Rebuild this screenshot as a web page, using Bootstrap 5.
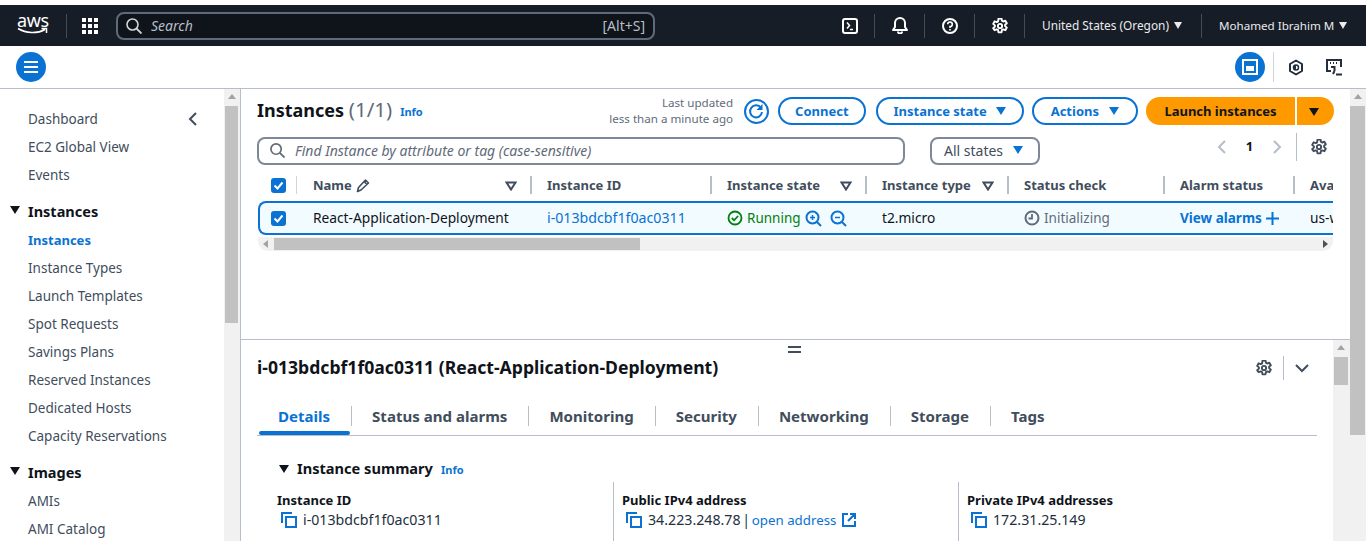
<!DOCTYPE html>
<html lang="en">

<head>
    <meta charset="UTF-8">
    <title>Instances | EC2</title>
    <link href="https://cdn.jsdelivr.net/npm/bootstrap@5.3.0/dist/css/bootstrap.min.css" rel="stylesheet">
    <style>
        body { font-family: "Noto Sans", "Open Sans", sans-serif; font-size: 13.5px; color: #0f141a; height: 541px; overflow: hidden; padding-top: 5px; background: #fff; }
        svg { display: block; flex: none; }
        a { text-decoration: none; color: #0972d3; }

        .topbar { height: 41px; background: #161d26; color: #e9ebed; font-size: 11.85px; }
        .aws-logo { width: 66px; padding-left: 17px; line-height: 1; color: #fff; }
        .aws-word { font-size: 18px; display: block; margin-top: -6px; height: 16px; letter-spacing: -.4px; }
        .top-sep { width: 1px; height: 24px; background: #414d5c; flex: none; }
        .apps-cell { width: 49px; padding-left: 15px; }
        .global-search { width: 539px; height: 28px; background: #0f141a; border: 2px solid #5f6b7a; border-radius: 8px; color: #b6bec9; font-size: 14px; padding: 0 8px; }
        .global-search i { margin-left: 9px; }
        .top-right { margin-left: auto; }
        .top-cell { width: 49px; }
        .region-cell { width: 176px; padding: 1px 0 0 17px; white-space: nowrap; }
        .user-cell { width: 164px; padding: 1px 0 0 17px; white-space: nowrap; font-size: 11.6px; }
        .nav-caret { display: inline-block; margin-left: 5px; vertical-align: 1px; border: 4.5px solid transparent; border-top: 7px solid #e9ebed; border-bottom: 0; }

        .subbar { height: 43px; border-bottom: 1px solid #b6bec9; padding: 0 13px 0 16px; }
        .round-btn { width: 30px; height: 30px; border-radius: 50%; background: #0972d3; }
        .sub-sep { width: 1px; height: 30px; background: #d1d5db; margin: 0 3px 0 8px; }
        .sub-icon { width: 38px; }

        .workspace { height: 452px; }
        .side-pane { width: 224px; flex: none; padding: 16px 0 0 28px; color: #414d5c; position: relative; }
        .side-link { height: 28px; line-height: 28px; white-space: nowrap; }
        .side-link.active { color: #0972d3; font-weight: 700; font-size: 13px; }
        .side-head { height: 28px; margin-top: 9px; line-height: 26px; font-size: 14.5px; font-weight: 700; color: #0f141a; position: relative; }
        .side-head::before { content: ""; position: absolute; left: -18px; top: 8px; border: 5.5px solid transparent; border-top: 8px solid #0f141a; border-bottom: 0; }
        .side-close { position: absolute; left: 188px; top: 23px; }

        .scroll-track { width: 16px; flex: none; background: #f1f1f1; position: relative; }
        .scroll-track::before { content: ""; position: absolute; left: 4px; top: 5px; border: 4px solid transparent; border-bottom: 5px solid #a3a3a3; border-top: 0; }
        .scroll-thumb { position: absolute; left: 1px; right: 2px; background: #c1c1c1; }
        .side-scroll .scroll-thumb { top: 17px; height: 217px; }
        .page-scroll .scroll-thumb { top: 17px; height: 329px; left: 0; right: 1px; }
        .inner-scroll { width: 17px; }
        .inner-scroll .scroll-thumb { top: 17px; height: 28px; }

        .main-area { border-left: 1px solid #b6bec9; min-width: 0; }
        .list-pane { height: 251px; padding: 8px 0 0 16px; border-bottom: 1px solid #b6bec9; }
        .list-inner { width: 1077px; }
        .head-row { height: 28px; }
        .page-title { font-size: 18px; font-weight: 700; margin: 0 0 4px; line-height: 28px; }
        .page-title span { font-weight: 400; font-size: 20.5px; color: #5f6b7a; }
        .info-link { font-size: 11px; font-weight: 700; margin: 3px 0 0 8px; }
        .updated-note { font-size: 11.6px; line-height: 16px; color: #5f6b7a; text-align: right; margin-right: 11px; }
        .refresh-icon { margin-right: 9px; }
        .btn-aws { height: 28px; padding: 0 16px; border: 2px solid #0972d3; border-radius: 20px; color: #0972d3; font-size: 13px; font-weight: 700; line-height: 24px; background: #fff; white-space: nowrap; }
        .btn-aws:hover { color: #0972d3; border-color: #0972d3; background: #fff; }
        .btn-connect { padding: 0 15px; }
        .btn-state { margin-left: 10px; }
        .btn-state .down-tri { margin-left: 9px; }
        .btn-actions { padding: 0 17px; }
        .down-tri { display: inline-block; margin-left: 10px; vertical-align: 1px; border: 5.5px solid transparent; border-top: 8px solid currentColor; border-bottom: 0; }
        .btn-launch { height: 28px; width: 149px; margin-left: 8px; padding: 1px 0 0; background: #ff9900; color: #0f141a; font-size: 13px; font-weight: 700; border: 0; border-radius: 20px 0 0 20px; white-space: nowrap; }
        .btn-launch-caret { height: 28px; width: 37px; margin-left: 2px; padding: 0 4px 0 0; background: #ff9900; color: #0f141a; border: 0; border-radius: 0 20px 20px 0; }
        .btn-launch-caret .down-tri { margin-left: 0; }

        .filter-row { height: 28px; margin-top: 12px; }
        .find-box { width: 648px; height: 28px; border: 2px solid #7d8998; border-radius: 8px; padding: 0 10px 2px 11px; font-size: 14px; font-style: italic; color: #5f6b7a; gap: 10px; }
        .state-select { width: 110px; height: 28px; margin-left: 25px; border: 2px solid #7d8998; border-radius: 8px; padding: 0 0 2px 12px; font-size: 14px; color: #414d5c; }
        .state-select .down-tri { color: #0972d3; }
        .pager { margin: 0 7px 8px auto; }
        .pager-num { width: 47px; text-align: center; font-weight: 700; font-size: 13px; color: #0f141a; }
        .pager-sep { width: 1px; height: 28px; background: #b6bec9; margin: 0 14px; }
        .tool-gear { color: #414d5c; }

        .table-clip { width: 1075px; margin-left: 1px; margin-top: 8px; overflow: hidden; }
        .table-clip table { table-layout: fixed; width: 1075px; border-collapse: separate; border-spacing: 0; margin: 0; }
        .table-clip th, .table-clip td { padding: 0 0 0 17px; white-space: nowrap; overflow: hidden; vertical-align: middle; border: 0; }
        .table-clip th { height: 24px; padding-top: 1px; font-weight: 700; font-size: 13px; color: #414d5c; position: relative; }
        .table-clip th + th::before { content: ""; position: absolute; left: 0; top: 3px; bottom: 3px; width: 2px; background: #b6bec9; }
        .table-clip th.light-sep::before { width: 1px; background: #d1d5db; }
        .th-inner { padding-right: 13px; }
        .table-clip td { height: 34px; background: #f2fbff; border-top: 2px solid #0972d3; border-bottom: 2px solid #0972d3; color: #0f141a; font-size: 13.75px; }
        .table-clip td:first-child { border-left: 2px solid #0972d3; border-radius: 8px 0 0 8px; padding-left: 11px; }
        .table-clip th:first-child { padding-left: 13px; }
        .table-clip .head-gap td { height: 4px; background: none; border: 0; padding: 0; }
        .id-link { font-size: 14.2px; }
        .state-ok { color: #037f0c; font-size: 13.5px; }
        .state-wait { color: #5f6b7a; font-size: 13.5px; }
        .cell-gap { gap: 4px; }
        .alarm-link { font-weight: 700; font-size: 13.5px; }
        .h-scroll { height: 14px; margin: 2px 0 0 1px; width: 1075px; background: #f1f1f1; border-radius: 0 0 10px 10px; position: relative; }
        .h-thumb { position: absolute; left: 16px; width: 366px; top: 1px; bottom: 1px; background: #c1c1c1; }
        .h-left, .h-right { position: absolute; top: 3px; border: 4px solid transparent; }
        .h-left { left: 5px; border-right: 5px solid #a3a3a3; border-left: 0; }
        .h-right { right: 5px; border-left: 5px solid #505050; border-right: 0; }

        .detail-wrap { min-height: 0; }
        .detail-pane { min-width: 0; padding: 0 16px; position: relative; }
        .drag-mark { position: absolute; left: 547px; top: 6px; width: 13px; height: 7px; border-top: 2px solid #414d5c; border-bottom: 2px solid #414d5c; }
        .detail-head { height: 66px; padding-bottom: 11px; }
        .detail-title { font-size: 17.6px; font-weight: 700; margin: 0; }
        .detail-tools { margin-left: auto; margin-right: 7px; }
        .tools-sep { width: 1px; height: 24px; background: #b6bec9; margin: 0 10px 0 11px; }
        .tab-row { border-bottom: 1px solid #b6bec9; height: 30px; }
        .tab-item { padding: 0 21px; height: 29px; font-size: 15.05px; font-weight: 700; color: #414d5c; position: relative; line-height: 21px; white-space: nowrap; }
        .tab-item + .tab-item::before { content: ""; position: absolute; left: 0; top: 0; height: 20px; width: 1px; background: #b6bec9; }
        .tab-item.active { color: #0972d3; }
        .tab-item.active::after { content: ""; position: absolute; left: 2px; right: 1px; bottom: 0; height: 4px; border-radius: 4px; background: #0972d3; }
        .summary-head { margin: 22px 0 0 22px; height: 22px; font-size: 14.6px; font-weight: 700; }
        .summary-caret { display: inline-block; margin-right: 8px; border: 5.5px solid transparent; border-top: 8px solid #0f141a; border-bottom: 0; }
        .summary-grid { margin: 2px 0 0 20px; width: 1030px; }
        .summary-col { width: 345px; height: 60px; padding-top: 9px; }
        .summary-col + .summary-col { border-left: 1px solid #b6bec9; padding-left: 8px; }
        .summary-col:first-child { width: 336px; }
        .field-name { font-size: 13px; font-weight: 700; line-height: 18px; }
        .field-value { margin: 2px 0 0 4px; line-height: 18px; font-size: 14.2px; color: #232f3e; gap: 6px; }
        .field-value span { word-spacing: -2px; }
        .field-value a { font-size: 13.3px; word-spacing: 0; }
    </style>
</head>

<body>
    <svg width="0" height="0" class="position-absolute">
        <defs>
            <symbol id="gear" viewBox="0.5 0.5 15 15">
                <path fill="none" stroke="currentColor" stroke-width="1.800" stroke-linejoin="round" d="M6.600 1h2.800l.4 2.100 1.200.7 2-.7 1.400 2.400-1.600 1.400v1.200l1.600 1.400-1.400 2.400-2-.7-1.200.7-.4 2.100H6.600l-.4-2.100-1.200-.7-2 .7L1.600 10l1.600-1.400V7.400L1.600 6 3 3.600l2 .7 1.200-.7z" />
                <circle cx="8" cy="8" r="2" fill="none" stroke="currentColor" stroke-width="1.800" />
            </symbol>
            <symbol id="copy" viewBox="0 0 16 16">
                <path fill="none" stroke="#0972d3" stroke-width="2" d="M1 11V1h10M5 5h10v10H5z" />
            </symbol>
            <symbol id="tri-outline" viewBox="0 0 12 10">
                <path fill="none" stroke="#414d5c" stroke-width="2" d="M1.500 1.500h9L6 8.500z" />
            </symbol>
            <symbol id="tick" viewBox="0 0 15 15">
                <rect width="15" height="15" rx="3" fill="#0972d3" />
                <path fill="none" stroke="#fff" stroke-width="2" d="M3.500 7.500l3 3 5-6" />
            </symbol>
        </defs>
    </svg>

    <!-- Top navigation -->
    <nav class="topbar d-flex align-items-center">
        <div class="aws-logo">
            <span class="aws-word">aws</span>
            <svg width="31" height="8" viewBox="0 0 31 8"><path fill="none" stroke="#fff" stroke-width="1.500" d="M1 1.500c8 5 19 5.500 27 1M24.500 1.500H29.500V6" /></svg>
        </div>
        <span class="top-sep"></span>
        <div class="apps-cell d-flex">
            <svg width="16" height="16" viewBox="0 0 16 16" fill="#fff"><path d="M0 0h4v4H0zM6 0h4v4H6zM12 0h4v4h-4zM0 6h4v4H0zM6 6h4v4H6zM12 6h4v4h-4zM0 12h4v4H0zM6 12h4v4H6zM12 12h4v4h-4z" /></svg>
        </div>
        <div class="global-search d-flex align-items-center">
            <svg width="16" height="16" viewBox="0 0 16 16"><circle cx="6.500" cy="6.500" r="5.500" fill="none" stroke="#d1d5db" stroke-width="1.600" /><path stroke="#d1d5db" stroke-width="1.800" d="M10.500 10.500l5 5" /></svg>
            <i>Search</i>
            <span class="ms-auto">[Alt+S]</span>
        </div>
        <div class="top-right d-flex align-items-center">
            <div class="top-cell d-flex justify-content-center">
                <svg width="16" height="16" viewBox="0 0 16 16"><rect x="1" y="1" width="14" height="14" rx="2" fill="none" stroke="#fff" stroke-width="2" /><path fill="none" stroke="#fff" stroke-width="1.500" d="M5 4.500l2.500 3L5 10.500M8 11.500h3" /></svg>
            </div>
            <span class="top-sep"></span>
            <div class="top-cell d-flex justify-content-center">
                <svg width="16" height="17" viewBox="0 0 16 17"><path fill="none" stroke="#fff" stroke-width="2" stroke-linejoin="round" d="M1 13h14l-2-3V6A5 5 0 0 0 3 6v4z" /><path fill="none" stroke="#fff" stroke-width="2" d="M6 14.500a2 2 0 0 0 4 0" /></svg>
            </div>
            <span class="top-sep"></span>
            <div class="top-cell d-flex justify-content-center">
                <svg width="16" height="16" viewBox="0 0 16 16"><circle cx="8" cy="8" r="7" fill="none" stroke="#fff" stroke-width="2" /><path fill="none" stroke="#fff" stroke-width="1.600" d="M5.700 6.300A2.300 2.300 0 1 1 8 8.600v1.500" /><path stroke="#fff" stroke-width="1.600" d="M8 11v1.500" /></svg>
            </div>
            <span class="top-sep"></span>
            <div class="top-cell d-flex justify-content-center text-white">
                <svg width="16" height="16"><use href="#gear" /></svg>
            </div>
            <span class="top-sep"></span>
            <div class="region-cell">United States (Oregon)<span class="nav-caret"></span></div>
            <span class="top-sep"></span>
            <div class="user-cell">Mohamed Ibrahim M<span class="nav-caret"></span></div>
        </div>
    </nav>

    <!-- Secondary bar -->
    <div class="subbar d-flex align-items-center">
        <div class="round-btn d-flex align-items-center justify-content-center">
            <svg width="16" height="14" viewBox="0 0 16 14"><path stroke="#fff" stroke-width="2" d="M1 2h14M1 7h14M1 12h14" /></svg>
        </div>
        <div class="ms-auto d-flex align-items-center">
            <div class="round-btn d-flex align-items-center justify-content-center">
                <svg width="16" height="16" viewBox="0 0 16 16"><rect x="1" y="1" width="14" height="14" fill="none" stroke="#fff" stroke-width="2" /><rect x="4" y="7" width="8" height="5" fill="#fff" /></svg>
            </div>
            <span class="sub-sep"></span>
            <div class="sub-icon d-flex justify-content-center">
                <svg width="16" height="17" viewBox="0 0 16 17"><path fill="none" stroke="#232f3e" stroke-width="2" stroke-linejoin="round" d="M8 1.500l6 3.500v7l-6 3.500L2 12V5z" /><circle cx="8" cy="8.500" r="2.500" fill="none" stroke="#232f3e" stroke-width="1.500" /><path fill="#232f3e" d="M8 6a2.500 2.500 0 0 0 0 5z" /></svg>
            </div>
            <div class="sub-icon d-flex justify-content-center">
                <svg width="16" height="17" viewBox="0 0 16 17"><path fill="none" stroke="#232f3e" stroke-width="2" d="M5 12H1V1h14v7" /><path stroke="#232f3e" stroke-width="2" d="M4 4h1M7 4h1M10 4h1M10 15.500h6" /><path fill="none" stroke="#232f3e" stroke-width="2" d="M5 8h3.500v4M7 15l1.500-3" /></svg>
            </div>
        </div>
    </div>

    <div class="workspace d-flex">
        <!-- Side navigation -->
        <aside class="side-pane">
            <a class="side-close text-reset" href="#">
                <svg width="10" height="14" viewBox="0 0 10 14"><path fill="none" stroke="#414d5c" stroke-width="2" d="M8 1L2 7l6 6" /></svg>
            </a>
            <div class="side-link">Dashboard</div>
            <div class="side-link">EC2 Global View</div>
            <div class="side-link">Events</div>
            <div class="side-head">Instances</div>
            <div class="side-link active">Instances</div>
            <div class="side-link">Instance Types</div>
            <div class="side-link">Launch Templates</div>
            <div class="side-link">Spot Requests</div>
            <div class="side-link">Savings Plans</div>
            <div class="side-link">Reserved Instances</div>
            <div class="side-link">Dedicated Hosts</div>
            <div class="side-link">Capacity Reservations</div>
            <div class="side-head">Images</div>
            <div class="side-link">AMIs</div>
            <div class="side-link">AMI Catalog</div>
        </aside>
        <div class="scroll-track side-scroll"><div class="scroll-thumb"></div></div>

        <main class="main-area flex-grow-1 d-flex flex-column">
            <!-- Instances list -->
            <section class="list-pane flex-shrink-0">
                <div class="list-inner">
                    <div class="head-row d-flex align-items-center">
                        <h1 class="page-title">Instances <span>(1/1)</span></h1>
                        <a class="info-link" href="#">Info</a>
                        <div class="updated-note ms-auto">Last updated<br>less than a minute ago</div>
                        <svg class="refresh-icon" width="25" height="25" viewBox="0 0 25 25"><circle cx="12.500" cy="12.500" r="11.500" fill="none" stroke="#0972d3" stroke-width="2" /><path fill="none" stroke="#0972d3" stroke-width="2" d="M17 9a6 6 0 1 0 1 4" /><path fill="#0972d3" d="M18.500 5v6h-6z" /></svg>
                        <button class="btn btn-aws btn-connect">Connect</button>
                        <button class="btn btn-aws btn-state">Instance state<span class="down-tri"></span></button>
                        <button class="btn btn-aws btn-actions ms-2">Actions<span class="down-tri"></span></button>
                        <button class="btn btn-launch">Launch instances</button>
                        <button class="btn btn-launch-caret"><span class="down-tri"></span></button>
                    </div>
                    <div class="filter-row d-flex align-items-center">
                        <div class="find-box d-flex align-items-center">
                            <svg width="15" height="15" viewBox="0 0 16 16"><circle cx="6.500" cy="6.500" r="5.500" fill="none" stroke="#5f6b7a" stroke-width="1.800" /><path stroke="#5f6b7a" stroke-width="2" d="M10.500 10.500l5 5" /></svg>
                            <span>Find Instance by attribute or tag (case-sensitive)</span>
                        </div>
                        <div class="state-select d-flex align-items-center">All states<span class="down-tri"></span></div>
                        <div class="pager d-flex align-items-center">
                            <svg width="9" height="14" viewBox="0 0 9 14"><path fill="none" stroke="#b6bec9" stroke-width="2" d="M8 1L2 7l6 6" /></svg>
                            <span class="pager-num">1</span>
                            <svg width="9" height="14" viewBox="0 0 9 14"><path fill="none" stroke="#b6bec9" stroke-width="2" d="M1 1l6 6-6 6" /></svg>
                            <span class="pager-sep"></span>
                            <svg width="16" height="16" class="tool-gear"><use href="#gear" /></svg>
                        </div>
                    </div>
                </div>

                <div class="table-clip">
                    <table class="table">
                        <colgroup>
                            <col style="width:38px"><col style="width:234px"><col style="width:180px"><col style="width:155px"><col style="width:142px"><col style="width:156px"><col style="width:130px"><col style="width:40px">
                        </colgroup>
                        <thead>
                            <tr>
                                <th><svg width="15" height="15"><use href="#tick" /></svg></th>
                                <th class="light-sep"><div class="d-flex align-items-center th-inner"><span>Name</span><svg class="ms-1" width="15" height="15" viewBox="0 0 15 15"><path fill="none" stroke="#414d5c" stroke-width="1.600" stroke-linejoin="round" d="M1.500 13.500l1-4 7-7.500 3 3-7.500 7zM8 3.500l3 3" /></svg><svg class="ms-auto" width="12" height="10"><use href="#tri-outline" /></svg></div></th>
                                <th>Instance ID</th>
                                <th><div class="d-flex align-items-center th-inner"><span>Instance state</span><svg class="ms-auto" width="12" height="10"><use href="#tri-outline" /></svg></div></th>
                                <th><div class="d-flex align-items-center th-inner"><span>Instance type</span><svg class="ms-auto" width="12" height="10"><use href="#tri-outline" /></svg></div></th>
                                <th>Status check</th>
                                <th>Alarm status</th>
                                <th>Ava</th>
                            </tr>
                        </thead>
                        <tbody>
                            <tr class="head-gap"><td colspan="8"></td></tr>
                            <tr>
                                <td><svg width="15" height="15"><use href="#tick" /></svg></td>
                                <td>React-Application-Deployment</td>
                                <td><a class="id-link" href="#">i-013bdcbf1f0ac0311</a></td>
                                <td><div class="d-flex align-items-center cell-gap state-ok">
                                    <svg width="16" height="16" viewBox="0 0 16 16"><circle cx="8" cy="8" r="6.500" fill="none" stroke="#037f0c" stroke-width="1.800" /><path fill="none" stroke="#037f0c" stroke-width="1.800" d="M4.800 8l2.300 2.300 4-4.300" /></svg>
                                    <span>Running</span>
                                    <svg width="17" height="17" viewBox="0 0 17 17"><circle cx="7.500" cy="7.500" r="6" fill="none" stroke="#0972d3" stroke-width="2" /><path stroke="#0972d3" stroke-width="2" d="M12 12l4 4" /><path stroke="#0972d3" stroke-width="1.500" d="M5 7.500h5M7.500 5v5" /></svg>
                                    <svg class="ms-1" width="17" height="17" viewBox="0 0 17 17"><circle cx="7.500" cy="7.500" r="6" fill="none" stroke="#0972d3" stroke-width="2" /><path stroke="#0972d3" stroke-width="2" d="M12 12l4 4" /><path stroke="#0972d3" stroke-width="1.500" d="M5 7.500h5" /></svg>
                                </div></td>
                                <td>t2.micro</td>
                                <td><div class="d-flex align-items-center cell-gap state-wait">
                                    <svg width="16" height="16" viewBox="0 0 16 16"><circle cx="8" cy="8" r="6.500" fill="none" stroke="#5f6b7a" stroke-width="2" /><path fill="none" stroke="#5f6b7a" stroke-width="1.800" d="M8 4v4.500H4.500" /></svg>
                                    <span>Initializing</span>
                                </div></td>
                                <td><div class="d-flex align-items-center cell-gap"><a class="alarm-link" href="#">View alarms</a><svg width="13" height="13" viewBox="0 0 13 13"><path stroke="#0972d3" stroke-width="2" d="M6.500 0v13M0 6.500h13" /></svg></div></td>
                                <td>us-west-2a</td>
                            </tr>
                        </tbody>
                    </table>
                </div>
                <div class="h-scroll"><span class="h-left"></span><span class="h-thumb"></span><span class="h-right"></span></div>
            </section>

            <!-- Instance details -->
            <div class="detail-wrap d-flex flex-grow-1">
                <section class="detail-pane flex-grow-1">
                    <span class="drag-mark"></span>
                    <div class="detail-head d-flex align-items-center">
                        <h2 class="detail-title">i-013bdcbf1f0ac0311 (React-Application-Deployment)</h2>
                        <div class="detail-tools d-flex align-items-center">
                            <svg width="16" height="16" class="tool-gear"><use href="#gear" /></svg>
                            <span class="tools-sep"></span>
                            <svg width="16" height="10" viewBox="0 0 16 10"><path fill="none" stroke="#414d5c" stroke-width="2" d="M2 2l6 6 6-6" /></svg>
                        </div>
                    </div>
                    <div class="tab-row d-flex">
                        <div class="tab-item active">Details</div>
                        <div class="tab-item">Status and alarms</div>
                        <div class="tab-item">Monitoring</div>
                        <div class="tab-item">Security</div>
                        <div class="tab-item">Networking</div>
                        <div class="tab-item">Storage</div>
                        <div class="tab-item">Tags</div>
                    </div>
                    <div class="summary-head d-flex align-items-center">
                        <span class="summary-caret"></span>Instance summary<a class="info-link" href="#">Info</a>
                    </div>
                    <div class="summary-grid d-flex">
                        <div class="summary-col">
                            <div class="field-name">Instance ID</div>
                            <div class="field-value d-flex align-items-center"><svg width="16" height="16"><use href="#copy" /></svg>i-013bdcbf1f0ac0311</div>
                        </div>
                        <div class="summary-col">
                            <div class="field-name">Public IPv4 address</div>
                            <div class="field-value d-flex align-items-center"><svg width="16" height="16"><use href="#copy" /></svg><span>34.223.248.78 | <a href="#">open address</a></span><svg width="14" height="14" viewBox="0 0 14 14"><path fill="none" stroke="#0972d3" stroke-width="2" d="M6 1H1v12h12V8M8 1h5v5M13 1L6 8" /></svg></div>
                        </div>
                        <div class="summary-col">
                            <div class="field-name">Private IPv4 addresses</div>
                            <div class="field-value d-flex align-items-center"><svg width="16" height="16"><use href="#copy" /></svg>172.31.25.149</div>
                        </div>
                    </div>
                </section>
                <div class="scroll-track inner-scroll"><div class="scroll-thumb"></div></div>
            </div>
        </main>
        <div class="scroll-track page-scroll"><div class="scroll-thumb"></div></div>
    </div>
</body>

</html>
